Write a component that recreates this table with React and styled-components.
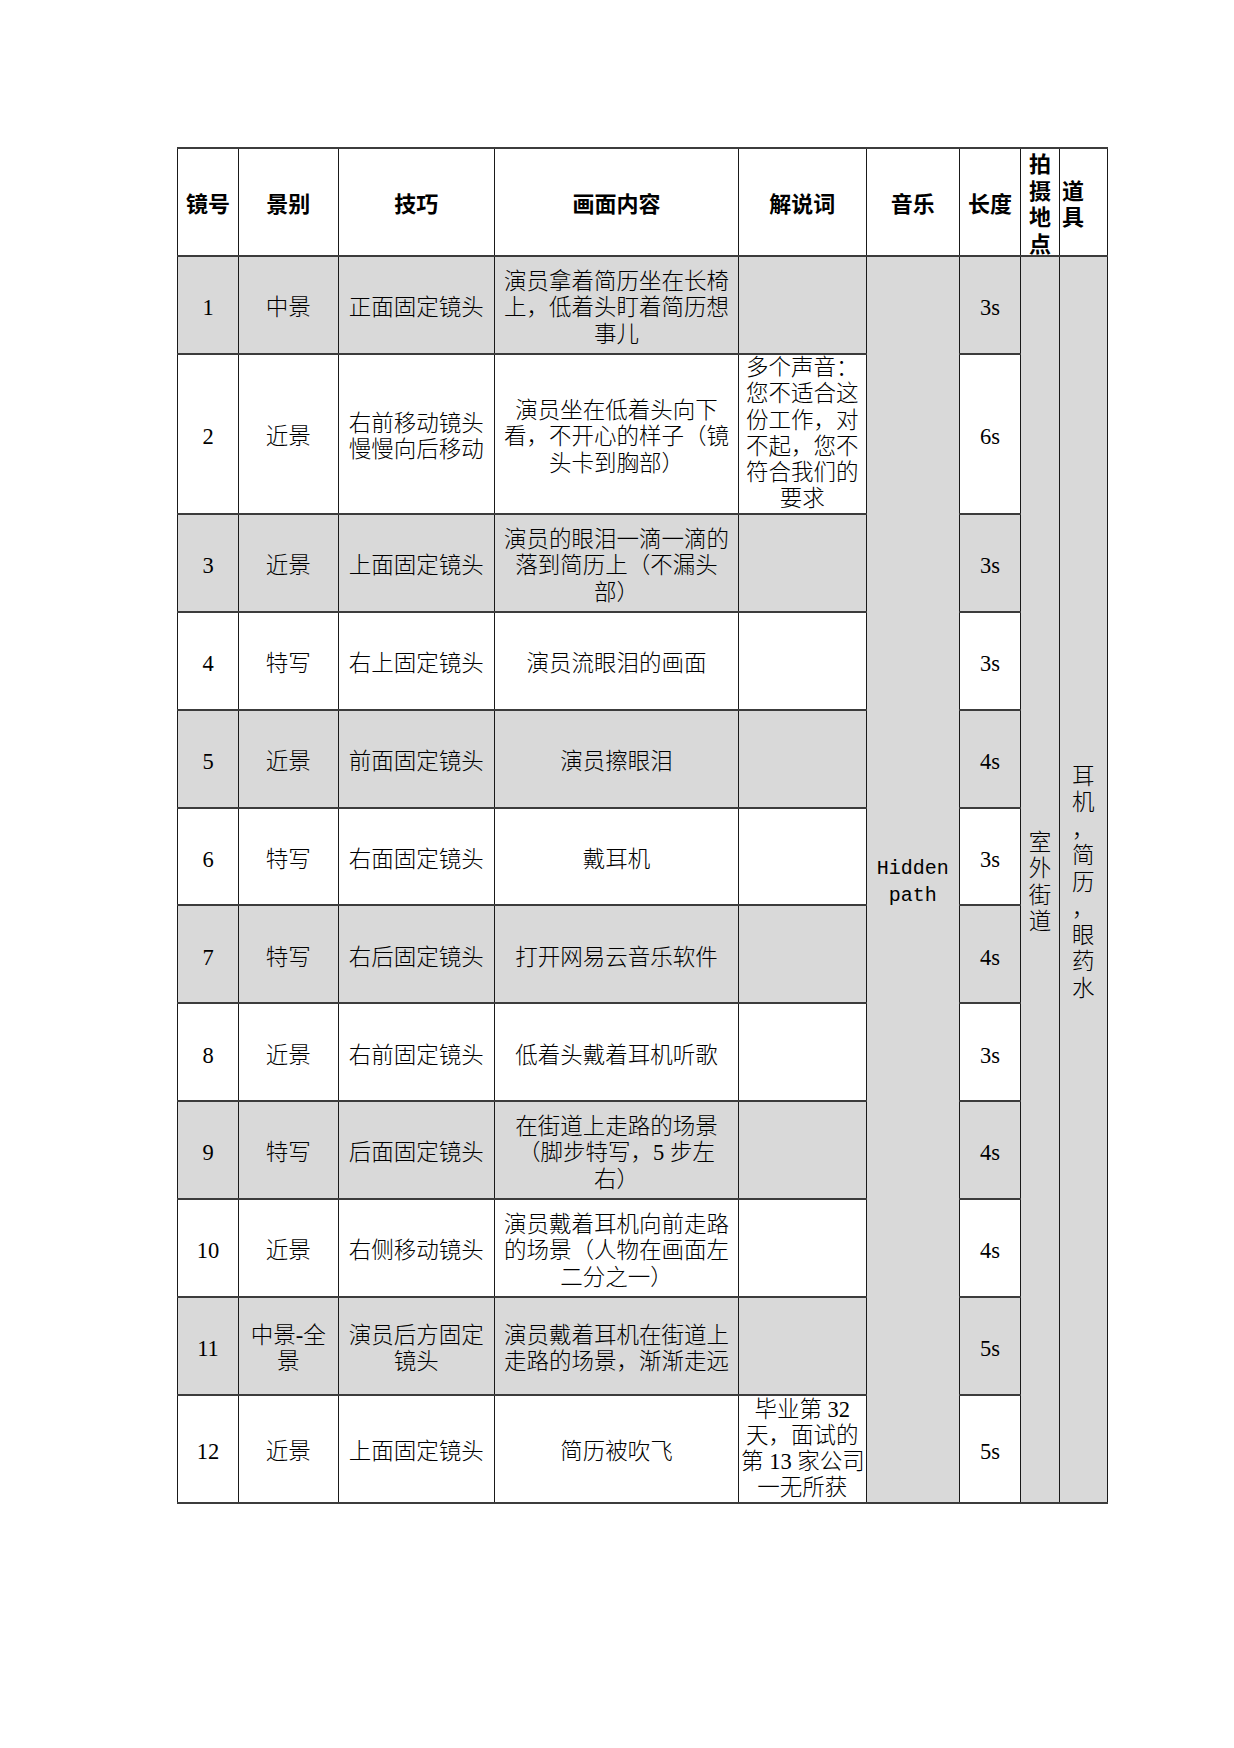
import React from "react";
import styled, { createGlobalStyle } from "styled-components";

const GlobalStyle = createGlobalStyle`
  html, body { margin: 0; padding: 0; background: #ffffff; }
  body {
    font-family: "Liberation Serif", "Noto Sans CJK SC", serif;
    color: #000;
  }
`;

const Page = styled.div`
  padding: 147px 0 0 177px;
  min-height: 1748px;
  box-sizing: border-box;
`;

const Sheet = styled.table`
  border-collapse: collapse;
  table-layout: fixed;
  width: 930px;
  border-top: 2px solid #3c3c3c;
  border-bottom: 2px solid #3c3c3c;
  border-left: 1px solid #111;
  border-right: 1px solid #222;
`;

const Row = styled.tr`
  height: ${(p) => p.$h}px;
`;

const baseCell = `
  border-top: 2px solid #3c3c3c;
  border-bottom: 2px solid #3c3c3c;
  border-left: 1px solid #1a1a1a;
  border-right: 1px solid #1a1a1a;
  font-size: 22.5px;
  line-height: 26.5px;
  vertical-align: middle;
  white-space: nowrap;
  overflow: hidden;
`;

const HeadCell = styled.th`
  ${baseCell}
  padding: 0 2px;
  font-family: "Noto Sans CJK SC", sans-serif;
  font-weight: 700;
  font-size: 22px;
  text-align: ${(p) => p.$align || "center"};
  background: #ffffff;
`;

const Cell = styled.td`
  ${baseCell}
  padding: ${(p) => (p.$tight ? "0 2px" : "7px 2px 0")};
  line-height: ${(p) => (p.$tight ? "26.2px" : "26.5px")};
  font-weight: 300;
  text-align: center;
  background: ${(p) => (p.$shade ? "#d9d9d9" : "#ffffff")};
  font-family: ${(p) =>
    p.$mono
      ? '"Liberation Mono", "Noto Sans CJK SC", monospace'
      : '"Liberation Serif", "Noto Sans CJK SC", serif'};
  font-size: ${(p) => (p.$mono ? "20px" : "22.5px")};
`;

const Lines = ({ lines }) =>
  lines.map((l, i) => (
    <React.Fragment key={i}>
      {i > 0 && <br />}
      {l}
    </React.Fragment>
  ));

const R = 97.9;

const rows = [
  { no: "1", shot: ["中景"], tech: ["正面固定镜头"], content: ["演员拿着简历坐在长椅", "上，低着头盯着简历想", "事儿"], narr: [], len: "3s", h: R },
  { no: "2", shot: ["近景"], tech: ["右前移动镜头", "慢慢向后移动"], content: ["演员坐在低着头向下", "看，不开心的样子（镜", "头卡到胸部）"], narr: ["多个声音：", "您不适合这", "份工作，对", "不起，您不", "符合我们的", "要求"], len: "6s", h: 160 },
  { no: "3", shot: ["近景"], tech: ["上面固定镜头"], content: ["演员的眼泪一滴一滴的", "落到简历上（不漏头", "部）"], narr: [], len: "3s", h: R },
  { no: "4", shot: ["特写"], tech: ["右上固定镜头"], content: ["演员流眼泪的画面"], narr: [], len: "3s", h: R },
  { no: "5", shot: ["近景"], tech: ["前面固定镜头"], content: ["演员擦眼泪"], narr: [], len: "4s", h: R },
  { no: "6", shot: ["特写"], tech: ["右面固定镜头"], content: ["戴耳机"], narr: [], len: "3s", h: R },
  { no: "7", shot: ["特写"], tech: ["右后固定镜头"], content: ["打开网易云音乐软件"], narr: [], len: "4s", h: R },
  { no: "8", shot: ["近景"], tech: ["右前固定镜头"], content: ["低着头戴着耳机听歌"], narr: [], len: "3s", h: R },
  { no: "9", shot: ["特写"], tech: ["后面固定镜头"], content: ["在街道上走路的场景", "（脚步特写，5 步左", "右）"], narr: [], len: "4s", h: R },
  { no: "10", shot: ["近景"], tech: ["右侧移动镜头"], content: ["演员戴着耳机向前走路", "的场景（人物在画面左", "二分之一）"], narr: [], len: "4s", h: R },
  { no: "11", shot: ["中景-全", "景"], tech: ["演员后方固定", "镜头"], content: ["演员戴着耳机在街道上", "走路的场景，渐渐走远"], narr: [], len: "5s", h: R },
  { no: "12", shot: ["近景"], tech: ["上面固定镜头"], content: ["简历被吹飞"], narr: ["毕业第 32", "天，面试的", "第 13 家公司", "一无所获"], len: "5s", h: 108 },
];

const widths = [61, 99.5, 156.5, 244, 127.5, 93.5, 61, 39, 47.5];

export default function App() {
  return (
    <>
      <GlobalStyle />
      <Page>
        <Sheet>
          <colgroup>
            {widths.map((w, i) => (
              <col key={i} style={{ width: `${w}px` }} />
            ))}
          </colgroup>
          <thead>
            <Row $h={108}>
              <HeadCell>镜号</HeadCell>
              <HeadCell>景别</HeadCell>
              <HeadCell>技巧</HeadCell>
              <HeadCell>画面内容</HeadCell>
              <HeadCell>解说词</HeadCell>
              <HeadCell>音乐</HeadCell>
              <HeadCell>长度</HeadCell>
              <HeadCell>
                <Lines lines={["拍", "摄", "地", "点"]} />
              </HeadCell>
              <HeadCell $align="left">
                <Lines lines={["道", "具"]} />
              </HeadCell>
            </Row>
          </thead>
          <tbody>
            {rows.map((r, i) => {
              const shade = i % 2 === 0;
              return (
                <Row key={r.no} $h={r.h}>
                  <Cell $shade={shade}>{r.no}</Cell>
                  <Cell $shade={shade}>
                    <Lines lines={r.shot} />
                  </Cell>
                  <Cell $shade={shade}>
                    <Lines lines={r.tech} />
                  </Cell>
                  <Cell $shade={shade}>
                    <Lines lines={r.content} />
                  </Cell>
                  <Cell $shade={shade} $tight>
                    <Lines lines={r.narr} />
                  </Cell>
                  {i === 0 && (
                    <Cell $shade $mono rowSpan={12}>
                      <Lines lines={["Hidden", "path"]} />
                    </Cell>
                  )}
                  <Cell $shade={shade}>{r.len}</Cell>
                  {i === 0 && (
                    <Cell $shade rowSpan={12}>
                      <Lines lines={["室", "外", "街", "道"]} />
                    </Cell>
                  )}
                  {i === 0 && (
                    <Cell $shade rowSpan={12}>
                      <Lines lines={["耳", "机", "，", "简", "历", "，", "眼", "药", "水"]} />
                    </Cell>
                  )}
                </Row>
              );
            })}
          </tbody>
        </Sheet>
      </Page>
    </>
  );
}
